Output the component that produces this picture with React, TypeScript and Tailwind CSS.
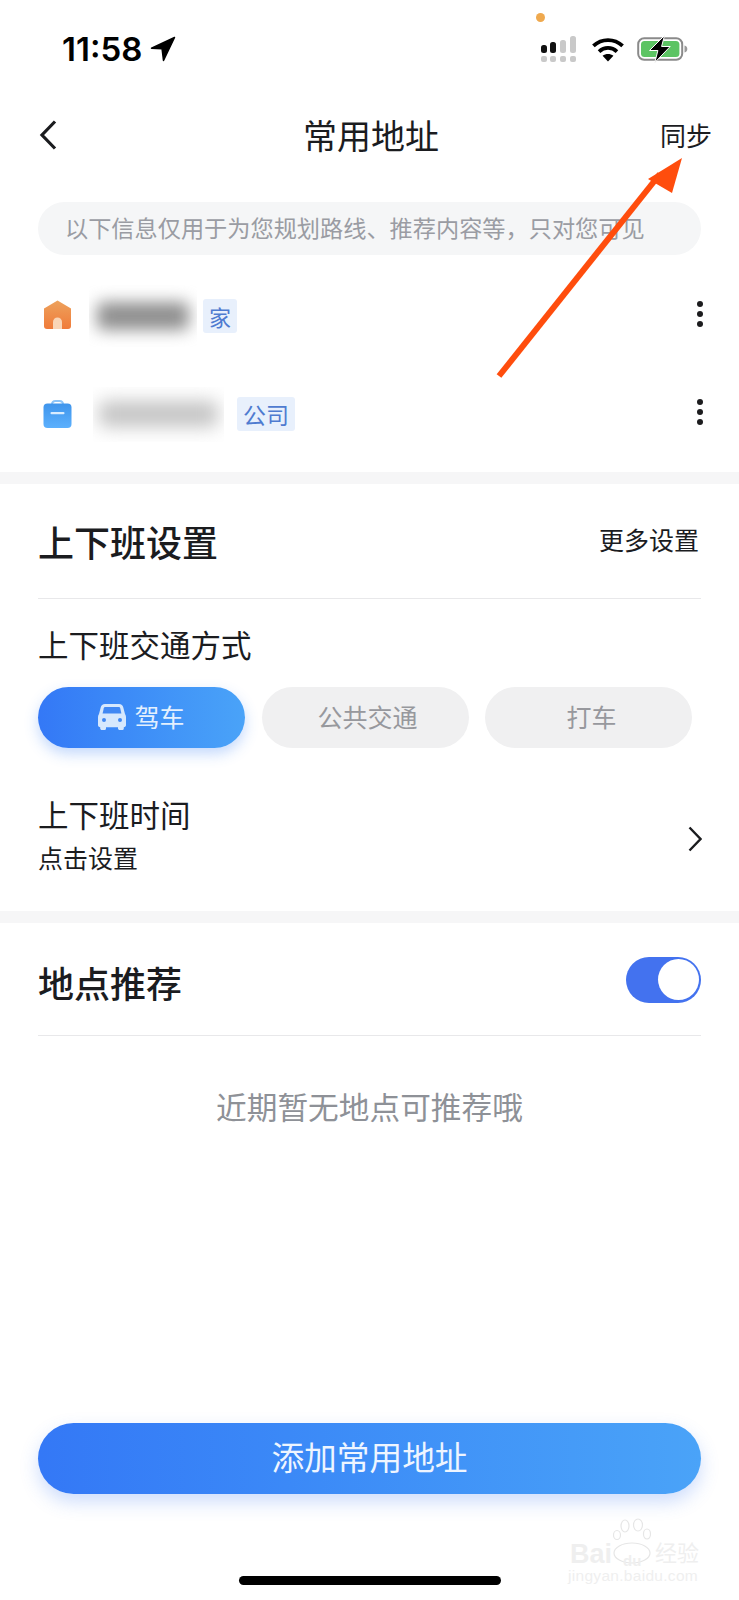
import React from "react";

function IconLocation() {
  return (
    <svg className="h-[26px] w-[26px]" viewBox="0 0 26 26" fill="#000">
      <path d="M24.5 1.5L1.5 12.2l10.6.6 1.4 11.7z" stroke="#000" strokeWidth="1.5" strokeLinejoin="round" />
    </svg>
  );
}

function IconSignal() {
  return (
    <svg className="h-[27px] w-[36px]" viewBox="0 0 36 27">
      <rect x="0" y="9" width="6" height="8" rx="2.5" fill="#111" />
      <rect x="9" y="6" width="6" height="11" rx="2.5" fill="#111" />
      <rect x="19" y="4" width="6" height="13" rx="2.5" fill="#c9c9c9" />
      <rect x="29" y="0" width="6" height="17" rx="2.5" fill="#c9c9c9" />
      <rect x="0" y="20" width="6" height="6" rx="2" fill="#c9c9c9" />
      <rect x="9" y="20" width="6" height="6" rx="2" fill="#c9c9c9" />
      <rect x="19" y="20" width="6" height="6" rx="2" fill="#c9c9c9" />
      <rect x="29" y="20" width="6" height="6" rx="2" fill="#c9c9c9" />
    </svg>
  );
}

function IconWifi() {
  return (
    <svg className="h-[25px] w-[34px]" viewBox="0 0 32 24" fill="none" stroke="#000" strokeWidth="3.6">
      <path d="M2 8.6C10 1 22 1 30 8.6" />
      <path d="M7.4 14C12.4 9.4 19.6 9.4 24.6 14" />
      <path d="M16 23.5l-5.2-5.4c3-2.4 7.4-2.4 10.4 0z" fill="#000" stroke="none" />
    </svg>
  );
}

function IconBattery() {
  return (
    <svg className="h-[28px] w-[52px]" viewBox="0 0 52 28">
      <rect x="1.2" y="3.2" width="44" height="21.6" rx="6" fill="#fff" stroke="#8a8a8a" strokeWidth="2" />
      <rect x="4" y="6" width="38.4" height="16" rx="3.5" fill="#5cc463" />
      <path d="M47.5 10.5c2 .6 2.8 1.8 2.8 3.5s-.8 2.9-2.8 3.5z" fill="#9a9a9a" />
      <path d="M27.5 0.5L12.5 15.5h8.4L17.8 27.5l15.4-16h-8.6z" fill="#000" stroke="#fff" strokeWidth="1" />
    </svg>
  );
}

function IconHome() {
  return (
    <svg className="mb-[4px] h-[29px] w-[29px]" viewBox="0 0 29 29">
      <defs>
        <linearGradient id="homeFill" x1="0" y1="0" x2="0" y2="1">
          <stop offset="0" stopColor="#eda25c" />
          <stop offset="1" stopColor="#f07b3a" />
        </linearGradient>
      </defs>
      <path d="M14.5.5L28 8.6V26a3 3 0 0 1-3 3H4a3 3 0 0 1-3-3V8.6z" fill="url(#homeFill)" />
      <path d="M10 29v-7a4.5 4.5 0 0 1 9 0v7z" fill="#f9d5b6" />
    </svg>
  );
}

function IconBag() {
  return (
    <svg className="h-[28px] w-[29px]" viewBox="0 0 29 28">
      <defs>
        <linearGradient id="bagFill" x1="0" y1="0" x2="0" y2="1">
          <stop offset="0" stopColor="#3f95ec" />
          <stop offset="1" stopColor="#5cb0fd" />
        </linearGradient>
      </defs>
      <path d="M9 4.5C9 2 10.5 1 12.5 1h4c2 0 3.500 1 3.500 3.500" fill="none" stroke="#8cc4f8" strokeWidth="2" />
      <rect x="0.500" y="3.500" width="28" height="24.500" rx="4" fill="url(#bagFill)" />
      <rect x="7.500" y="12" width="14" height="2.200" rx="1" fill="#d8ecff" />
    </svg>
  );
}

function IconCar() {
  return (
    <svg className="h-[28px] w-[28px]" viewBox="0 0 28 28" fill="#d6e8fd">
      <path d="M7 1h14c2.400 0 3.800 1.300 4.300 3.400L27 11c.7.900 1 1.800 1 3v8c0 1.300-.9 2.200-2.200 2.200v1.300c0 1-.8 1.500-1.800 1.500h-2.200c-1 0-1.800-.6-1.800-1.500v-1.300H8v1.300c0 1-.8 1.500-1.800 1.500H4c-1 0-1.800-.6-1.800-1.500v-1.300C.9 24.200 0 23.300 0 22v-8c0-1.200.3-2.100 1-3l1.700-6.600C3.200 2.300 4.600 1 7 1z" />
      <path d="M7.400 4h13.200c.9 0 1.400.4 1.600 1.200l1.200 5.300H4.600l1.200-5.300C6 4.400 6.500 4 7.400 4z" fill="#4188f3" />
      <circle cx="6" cy="17" r="2" fill="#4188f3" />
      <circle cx="22" cy="17" r="2" fill="#4188f3" />
    </svg>
  );
}

function Dots() {
  return (
    <div className="mb-[4px] flex flex-col gap-[4px]">
      <div className="h-[6px] w-[6px] rounded-full bg-[#1c1c1e]" />
      <div className="h-[6px] w-[6px] rounded-full bg-[#1c1c1e]" />
      <div className="h-[6px] w-[6px] rounded-full bg-[#1c1c1e]" />
    </div>
  );
}

export default function App() {
  return (
    <div className="relative flex h-[1600px] w-[739px] flex-col overflow-hidden bg-white font-['Noto_Sans_CJK_SC','Noto_Sans',sans-serif] text-[#1b1c1f]">
      <div className="absolute left-[536px] top-[13px] h-[9px] w-[9px] rounded-full bg-[#efa94e]" />

      {/* status bar */}
      <div className="flex h-[98px] shrink-0 items-center justify-between pl-[62px] pr-[50px]">
        <div className="flex items-center gap-[8px]">
          <span className="font-['Inter',sans-serif] text-[33px] font-semibold leading-none tracking-[0px] text-black">11:58</span>
          <IconLocation />
        </div>
        <div className="flex items-center">
          <IconSignal />
          <div className="ml-[14px]"><IconWifi /></div>
          <div className="ml-[12px]"><IconBattery /></div>
        </div>
      </div>

      {/* nav */}
      <div className="flex h-[78px] shrink-0 items-center justify-between pb-[4px] pl-[39px] pr-[27px]">
        <div className="w-[43px]">
          <svg className="h-[30px] w-[18px]" viewBox="0 0 18 30" fill="none" stroke="#1b1c1f" strokeWidth="3.2">
            <path d="M16 1.500L3 15l13 13.500" />
          </svg>
        </div>
        <div className="text-[34px] leading-none">常用地址</div>
        <div className="w-[52px] text-[26px] leading-none">同步</div>
      </div>

      {/* notice */}
      <div className="mx-[38px] mt-[26px] flex h-[53px] shrink-0 items-center rounded-[27px] bg-[#f5f6f7] pb-[2px] pl-[27px] text-[23.2px] leading-none text-[#9a9ca3]">
        以下信息仅用于为您规划路线、推荐内容等，只对您可见
      </div>

      {/* addresses */}
      <div className="flex shrink-0 flex-col pb-[9px] pl-[43px] pr-[36px] pt-[12px]">
        <div className="flex h-[98px] items-center">
          <IconHome />
          <div className="ml-[17px] h-[62px] w-[108px] overflow-hidden">
            <div className="mx-[8px] mt-[17px] h-[28px] rounded-[6px] bg-[#8f8f8f] blur-[8px]" />
          </div>
          <div className="ml-[6px] flex h-[34px] w-[34px] items-center justify-center rounded-[3px] bg-[#e8f0fc] text-[22px] leading-none text-[#4f7bd0]">家</div>
          <div className="ml-auto"><Dots /></div>
        </div>
        <div className="flex h-[98px] items-center">
          <IconBag />
          <div className="ml-[21px] h-[55px] w-[131px] overflow-hidden">
            <div className="mx-[6px] mt-[14px] h-[26px] rounded-[6px] bg-[#c4c4c4] blur-[9px]" />
          </div>
          <div className="ml-[13px] flex h-[34px] w-[58px] items-center justify-center rounded-[3px] bg-[#e8f0fc] text-[23px] leading-none text-[#4f7bd0]">公司</div>
          <div className="ml-auto"><Dots /></div>
        </div>
      </div>

      <div className="h-[12px] shrink-0 bg-[#f6f6f7]" />

      {/* commute */}
      <div className="mx-[38px] flex h-[115px] shrink-0 items-center justify-between border-b border-[#e8e8ea]">
        <div className="text-[36px] font-medium leading-none">上下班设置</div>
        <div className="mb-[4px] mr-[2px] text-[25px] leading-none">更多设置</div>
      </div>
      <div className="ml-[38px] mt-[30px] text-[30.500px] leading-[30px]">上下班交通方式</div>
      <div className="ml-[38px] mt-[28px] flex shrink-0 gap-[16.500px]">
        <div className="flex h-[61px] w-[207px] items-center justify-center gap-[8px] rounded-full bg-gradient-to-r from-[#3478f6] to-[#4aa3f8] pb-[2px] text-[25px] leading-none text-[#e4f0fe] shadow-[0_6px_14px_rgba(60,130,245,0.3)]">
          <IconCar />
          <span>驾车</span>
        </div>
        <div className="flex h-[61px] w-[207px] items-center justify-center rounded-full bg-[#f0f0f1] pb-[2px] pl-[5px] text-[25px] leading-none text-[#97989d]">公共交通</div>
        <div className="flex h-[61px] w-[207px] items-center justify-center rounded-full bg-[#f0f0f1] pb-[2px] pl-[6px] text-[25px] leading-none text-[#97989d]">打车</div>
      </div>
      <div className="mb-[38px] ml-[38px] mr-[37px] mt-[46px] flex shrink-0 items-center justify-between">
        <div>
          <div className="text-[30.500px] leading-[40px]">上下班时间</div>
          <div className="mt-[7px] text-[25px] leading-[32px]">点击设置</div>
        </div>
        <svg className="mt-[10px] h-[26px] w-[14px]" viewBox="0 0 14 26" fill="none" stroke="#1b1c1f" strokeWidth="2.4">
          <path d="M1.500 1.500L12.500 13 1.500 24.500" />
        </svg>
      </div>

      <div className="h-[12px] shrink-0 bg-[#f6f6f7]" />

      {/* suggestions */}
      <div className="mx-[38px] flex h-[113px] shrink-0 items-center justify-between border-b border-[#e8e8ea] pt-[1px]">
        <div className="mt-[4px] text-[36px] font-medium leading-none">地点推荐</div>
        <div className="flex h-[46px] w-[75px] items-center justify-end rounded-full bg-[#4372ef] pr-[2px]">
          <div className="h-[41px] w-[41px] rounded-full bg-white" />
        </div>
      </div>
      <div className="mt-[54px] text-center text-[30.700px] leading-[32px] text-[#8e9197]">近期暂无地点可推荐哦</div>

      {/* add button */}
      <div className="mx-[38px] mt-auto flex h-[71px] shrink-0 items-center justify-center rounded-full bg-gradient-to-r from-[#3478f6] to-[#4aa3f8] pb-[4px] text-[32.700px] leading-none text-[#eef5ff] shadow-[0_8px_18px_rgba(60,120,245,0.25)]">
        添加常用地址
      </div>
      <div className="mb-[15px] ml-[239px] mt-[82px] h-[9px] w-[262px] shrink-0 rounded-full bg-black" />

      {/* annotation arrow */}
      <svg className="absolute left-[490px] top-[150px] h-[240px] w-[200px]" viewBox="0 0 200 240">
        <path d="M9 226L170 24" stroke="#ff4d0d" strokeWidth="6" fill="none" />
        <path d="M192 8L158 29l24 14z" fill="#ff4d0d" />
      </svg>

      {/* watermark */}
      <div className="absolute left-[568px] top-[1518px] h-[66px] w-[134px] font-['Liberation_Sans',sans-serif] leading-none text-[#efefef]">
        <svg className="absolute left-[44px] top-0 h-[46px] w-[40px]" viewBox="0 0 40 46" fill="none" stroke="#e6e6e6" strokeWidth="1.2">
          <ellipse cx="5" cy="17" rx="3.500" ry="4.500" />
          <ellipse cx="13" cy="8" rx="4" ry="6" />
          <ellipse cx="26" cy="7" rx="4.500" ry="6" />
          <ellipse cx="35" cy="16" rx="3.500" ry="5" />
          <ellipse cx="20" cy="35" rx="18" ry="10" />
        </svg>
        <div className="absolute left-[2px] top-[23px] text-[27px] font-bold">Bai</div>
        <div className="absolute left-[55px] top-[35px] text-[15px] font-bold">du</div>
        <div className="absolute left-[87px] top-[22px] font-['Noto_Sans_CJK_SC',sans-serif] text-[22px]">经验</div>
        <div className="absolute left-0 top-[50px] text-[15.500px] tracking-[0.3px]">jingyan.baidu.com</div>
      </div>
    </div>
  );
}
